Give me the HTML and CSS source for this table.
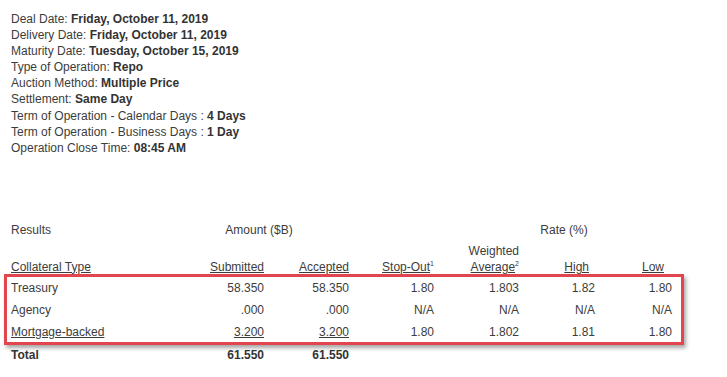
FILE: index.html
```html
<!DOCTYPE html>
<html>
<head>
<meta charset="utf-8">
<link rel="stylesheet" href="styles.css">
</head>
<body>
<div class="page">
  <div class="info">
    <div>Deal Date: <b>Friday, October 11, 2019</b></div>
    <div>Delivery Date: <b>Friday, October 11, 2019</b></div>
    <div>Maturity Date: <b>Tuesday, October 15, 2019</b></div>
    <div>Type of Operation: <b>Repo</b></div>
    <div>Auction Method: <b>Multiple Price</b></div>
    <div>Settlement: <b>Same Day</b></div>
    <div>Term of Operation - Calendar Days : <b>4 Days</b></div>
    <div>Term of Operation - Business Days : <b>1 Day</b></div>
    <div>Operation Close Time: <b>08:45 AM</b></div>
  </div>

  <div class="results">
    <div class="row group">
      <div class="c1">Results</div>
      <div class="amount">Amount ($B)</div>
      <div class="rate">Rate (%)</div>
    </div>
    <div class="row head">
      <div class="c1"><u>Collateral Type</u></div>
      <div class="num"><u>Submitted</u></div>
      <div class="num"><u>Accepted</u></div>
      <div class="num"><u>Stop-Out</u><sup>1</sup></div>
      <div class="num">Weighted<br><u>Average</u><sup>2</sup></div>
      <div class="num pad"><u>High</u></div>
      <div class="num pad2"><u>Low</u></div>
    </div>
    <div class="box">
      <div class="row body">
        <div class="c1">Treasury</div>
        <div class="num">58.350</div>
        <div class="num">58.350</div>
        <div class="num">1.80</div>
        <div class="num">1.803</div>
        <div class="num">1.82</div>
        <div class="num">1.80</div>
      </div>
      <div class="row body">
        <div class="c1">Agency</div>
        <div class="num">.000</div>
        <div class="num">.000</div>
        <div class="num">N/A</div>
        <div class="num">N/A</div>
        <div class="num">N/A</div>
        <div class="num">N/A</div>
      </div>
      <div class="row body">
        <div class="c1"><u>Mortgage-backed</u></div>
        <div class="num"><u>3.200</u></div>
        <div class="num"><u>3.200</u></div>
        <div class="num">1.80</div>
        <div class="num">1.802</div>
        <div class="num">1.81</div>
        <div class="num">1.80</div>
      </div>
    </div>
    <div class="row body total">
      <div class="c1">Total</div>
      <div class="num">61.550</div>
      <div class="num">61.550</div>
      <div class="num"></div>
      <div class="num"></div>
      <div class="num"></div>
      <div class="num"></div>
    </div>
  </div>
</div>
</body>
</html>
```

FILE: styles.css
```css
html, body {
  margin: 0;
  padding: 0;
  background: #ffffff;
}
body {
  font-family: "Liberation Sans", Arial, sans-serif;
  font-size: 12px;
  color: #3c3c3c;
}
.page {
  padding: 11px 0 0 11px;
}
.info {
  line-height: 16.1px;
}
.info b {
  font-weight: bold;
  color: #333;
}
.results {
  margin-top: 66px;
}
.row {
  display: grid;
  grid-template-columns: 168px 85px 85px 85px 85px 76px 77px;
  align-items: end;
}
.group {
  height: 16px;
  line-height: 16px;
}
.group .amount {
  grid-column: 2 / 4;
  text-align: center;
  margin-left: -10px;
}
.group .rate {
  grid-column: 4 / 8;
  text-align: center;
  margin-left: 107px;
}
.head {
  line-height: 16px;
  margin-top: 5px;
}
.num {
  text-align: right;
}
.head .pad {
  padding-right: 6px;
}
.head .pad2 {
  padding-right: 8px;
}
sup {
  font-size: 7px;
  line-height: 0;
  vertical-align: 5px;
}
.box {
  margin: -1px 0 0 -7px;
  width: 666px;
  border: 3px solid #e2454e;
  padding: 0 4px;
  box-shadow: 2px 3px 4px rgba(0, 0, 0, 0.35);
}
.body {
  height: 22px;
  line-height: 20px;
}
.box .row:first-child {
  margin-top: -1px;
}
.total {
  font-weight: bold;
  color: #333;
  margin-top: -2px;
}
```
